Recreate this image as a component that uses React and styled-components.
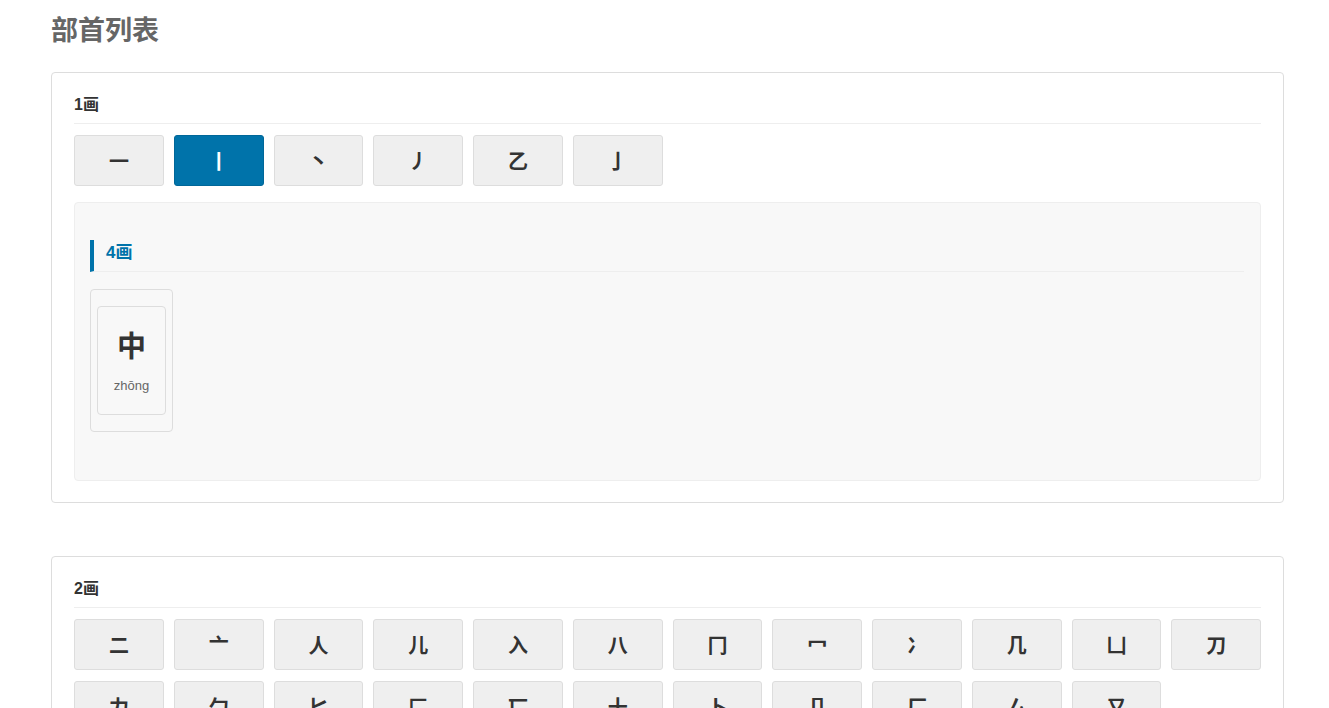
import React, { useState } from 'react';
import styled, { createGlobalStyle } from 'styled-components';

const GlobalStyle = createGlobalStyle`
  body {
    margin: 0;
    padding: 0;
    background: #fff;
    font-family: 'Liberation Sans', 'Noto Sans CJK SC', sans-serif;
    color: #333;
  }
`;

const Page = styled.div`
  width: 1233px;
  margin-left: 51px;
  padding-bottom: 40px;
`;

const Title = styled.h2`
  margin: 0;
  padding-top: 14px;
  height: 72px;
  box-sizing: border-box;
  font-size: 27px;
  line-height: 34px;
  font-weight: 700;
  color: #666;
`;

const Group = styled.section`
  border: 1px solid #ddd;
  border-radius: 4px;
  padding: 22px 22px 21px;
  margin-bottom: 53px;
  background: #fff;
`;

const GroupHeader = styled.h3`
  margin: 0;
  padding-bottom: 8px;
  font-size: 16px;
  line-height: 20px;
  font-weight: 700;
  color: #333;
  border-bottom: 1px solid #eee;
`;

const ButtonGrid = styled.div`
  display: grid;
  grid-template-columns: repeat(12, 1fr);
  column-gap: 10px;
  row-gap: 11px;
  margin-top: 11px;
`;

const RadicalButton = styled.button`
  height: 51px;
  border: 1px solid ${(p) => (p.$active ? '#006799' : '#ddd')};
  border-radius: 3px;
  background: ${(p) => (p.$active ? '#0073aa' : '#efefef')};
  color: ${(p) => (p.$active ? '#fff' : '#333')};
  font-family: 'Noto Sans CJK SC', sans-serif;
  font-size: 20px;
  font-weight: 700;
  cursor: pointer;
  padding: 0;
`;

const Panel = styled.div`
  margin-top: 16px;
  background: #f8f8f8;
  border: 1px solid #eee;
  border-radius: 4px;
  padding: 37px 16px 48px 15px;
`;

const StrokeHeader = styled.h4`
  margin: 0;
  height: 32px;
  box-sizing: border-box;
  padding-left: 12px;
  border-left: 4px solid #0073aa;
  border-bottom: 1px solid #eee;
  font-size: 17px;
  line-height: 26px;
  font-weight: 700;
  color: #0073aa;
`;

const CharList = styled.div`
  display: flex;
  flex-wrap: wrap;
  gap: 10px;
  margin-top: 17px;
`;

const CharCell = styled.div`
  border: 1px solid #ddd;
  border-radius: 4px;
  padding: 16px 6px;
`;

const CharCard = styled.div`
  width: 67px;
  height: 107px;
  border: 1px solid #ddd;
  border-radius: 4px;
  display: flex;
  flex-direction: column;
  align-items: center;
`;

const Hanzi = styled.div`
  margin-top: 19px;
  font-family: 'Noto Sans CJK SC', sans-serif;
  font-size: 29px;
  line-height: 36px;
  font-weight: 700;
  color: #333;
`;

const Pinyin = styled.div`
  margin-top: 16px;
  font-size: 13px;
  line-height: 16px;
  color: #666;
`;

const GROUPS = [
  { strokes: 1, radicals: ['一', '丨', '丶', '丿', '乙', '亅'] },
  {
    strokes: 2,
    radicals: [
      '二', '亠', '人', '儿', '入', '八', '冂', '冖', '冫', '几', '凵', '刀',
      '力', '勹', '匕', '匚', '匸', '十', '卜', '卩', '厂', '厶', '又',
    ],
  },
];

const CHARS = {
  '丨': [{ strokes: 4, list: [{ han: '中', py: 'zhōng' }] }],
};

export default function App() {
  const [selected, setSelected] = useState('丨');

  return (
    <>
      <GlobalStyle />
      <Page>
        <Title>部首列表</Title>
        {GROUPS.map((g) => {
          const open = g.radicals.includes(selected) ? CHARS[selected] : null;
          return (
            <Group key={g.strokes}>
              <GroupHeader>{g.strokes}画</GroupHeader>
              <ButtonGrid>
                {g.radicals.map((r) => (
                  <RadicalButton
                    key={r}
                    $active={r === selected}
                    onClick={() => setSelected(r)}
                  >
                    {r}
                  </RadicalButton>
                ))}
              </ButtonGrid>
              {open && (
                <Panel>
                  {open.map((s) => (
                    <div key={s.strokes}>
                      <StrokeHeader>{s.strokes}画</StrokeHeader>
                      <CharList>
                        {s.list.map((c) => (
                          <CharCell key={c.han}>
                            <CharCard>
                              <Hanzi>{c.han}</Hanzi>
                              <Pinyin>{c.py}</Pinyin>
                            </CharCard>
                          </CharCell>
                        ))}
                      </CharList>
                    </div>
                  ))}
                </Panel>
              )}
            </Group>
          );
        })}
      </Page>
    </>
  );
}
